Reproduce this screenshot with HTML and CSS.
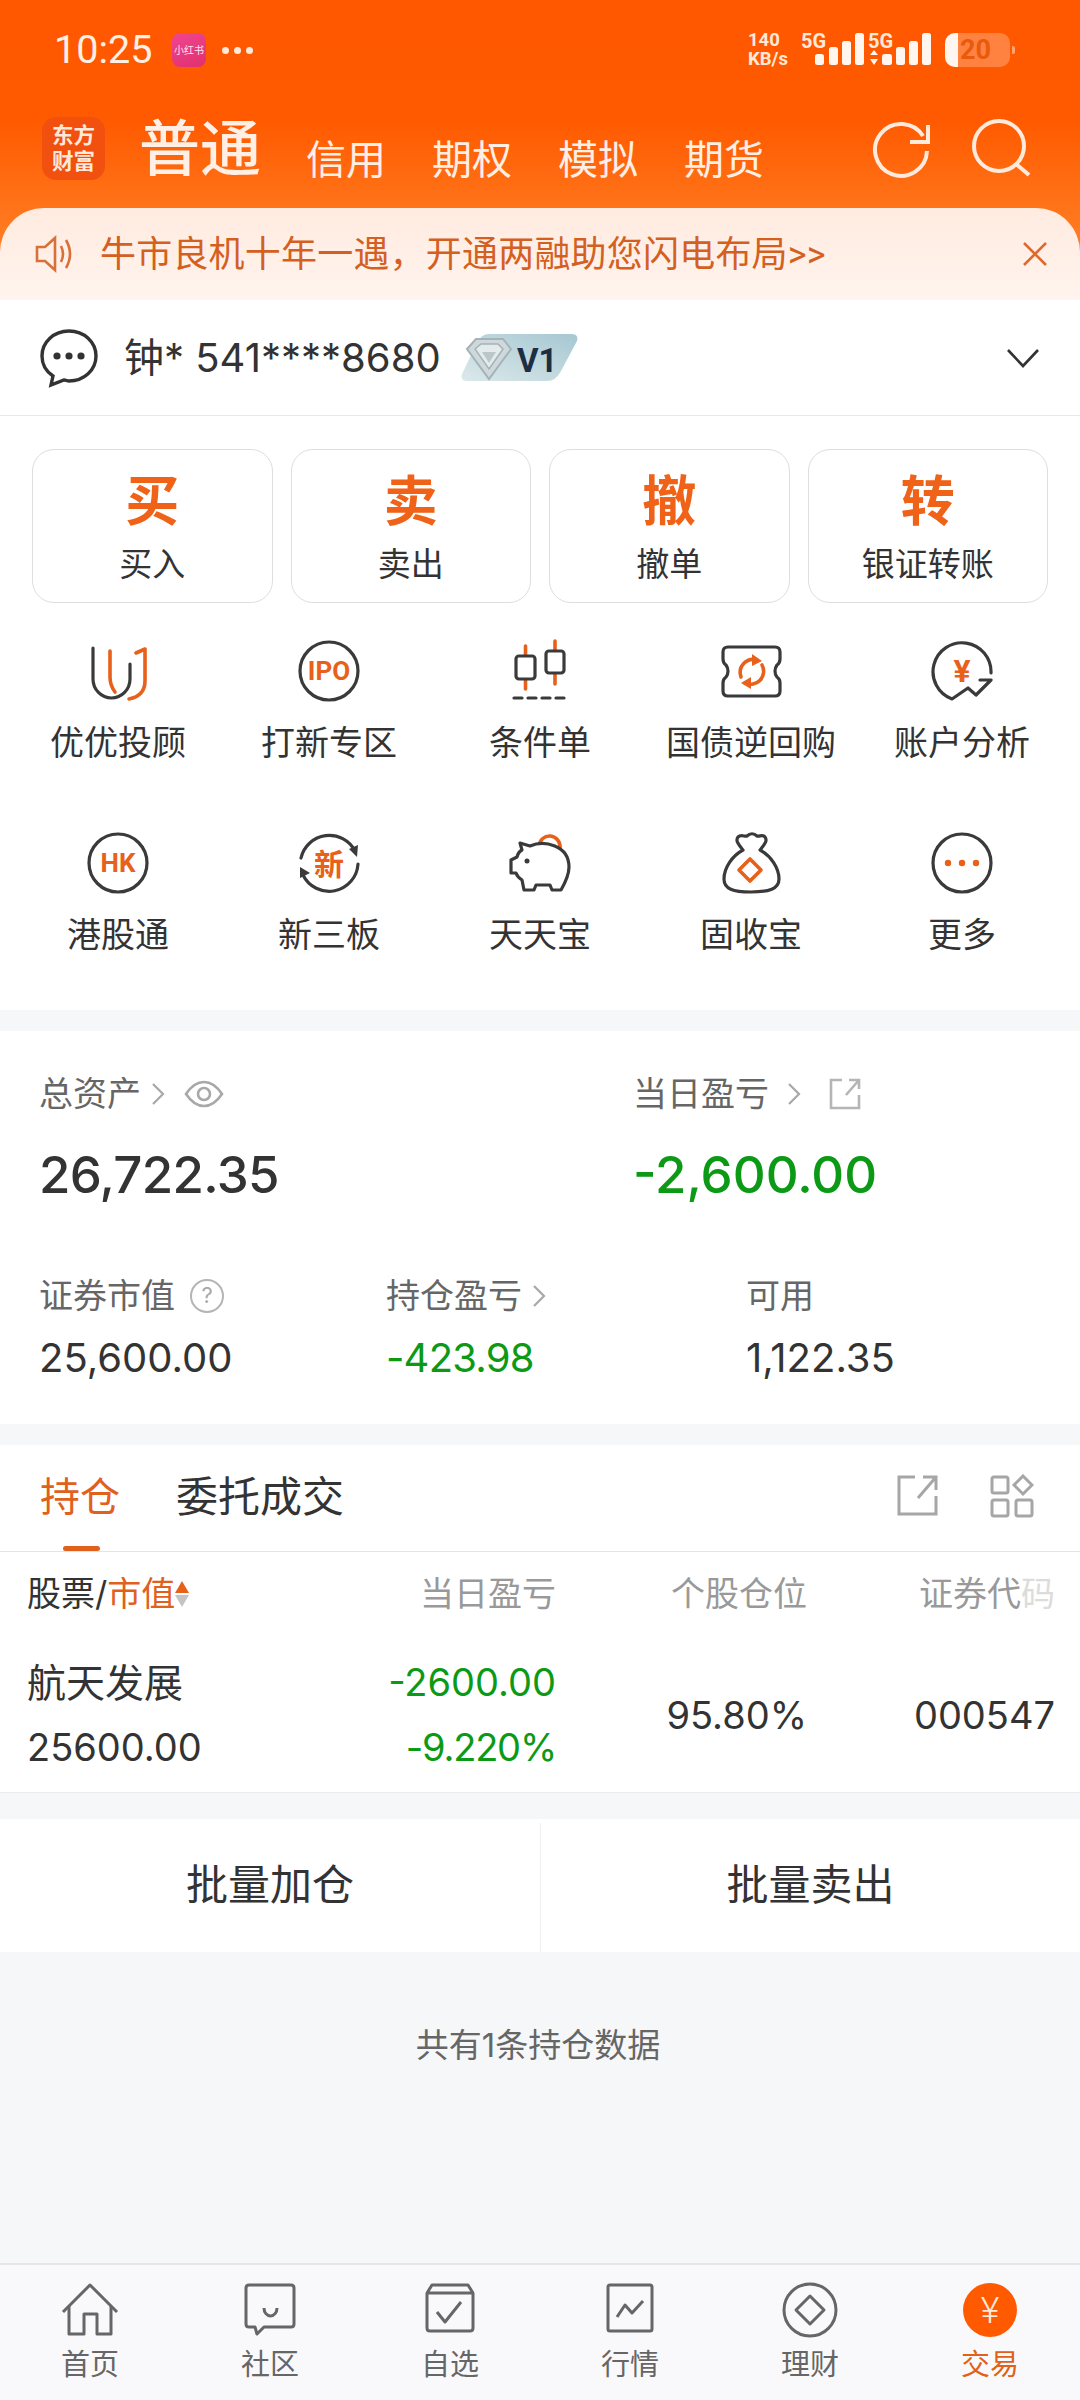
FILE: index.html
```html
<!DOCTYPE html>
<html lang="zh-CN">
<head>
<meta charset="utf-8">
<title>交易</title>
<link rel="stylesheet" href="styles.css">
</head>
<body>
<div class="app">
  <header class="header">
    <div class="status">
      <div class="status-left">
        <span class="clock">10:25</span>
        <span class="xhs">小红书</span>
        <span class="status-dots"><i></i><i></i><i></i></span>
      </div>
      <div class="status-right">
        <div class="speed"><span>140</span><span>KB/s</span></div>
        <svg class="signal" width="64" height="40" viewBox="0 -4 64 40"><text x="1" y="16" class="sig-t">5G</text><rect x="15" y="22" width="9" height="11" rx="2.5"/><rect x="29" y="15" width="9" height="18" rx="2.5"/><rect x="42" y="9" width="9" height="24" rx="2.5"/><rect x="55" y="1" width="9" height="32" rx="2.5"/></svg>
        <svg class="signal" width="64" height="40" viewBox="0 -4 64 40"><text x="0" y="16" class="sig-t">5G</text><path d="M6 18l4 5H2zM6 33l4-6H2z"/><rect x="14" y="22" width="10" height="11" rx="2.5"/><rect x="28" y="15" width="9" height="18" rx="2.5"/><rect x="41" y="9" width="9" height="24" rx="2.5"/><rect x="54" y="1" width="9" height="32" rx="2.5"/></svg>
        <div class="battery"><span class="battery-fill"></span><span class="battery-num">20</span></div>
        <span class="battery-tip"></span>
      </div>
    </div>
    <div class="topbar">
      <div class="logo">东方<br>财富</div>
      <nav class="modes">
        <span class="mode-main">普通</span>
        <span class="mode">信用</span>
        <span class="mode">期权</span>
        <span class="mode">模拟</span>
        <span class="mode">期货</span>
      </nav>
      <div class="top-actions">
        <svg class="ico-refresh" width="60" height="60" viewBox="0 0 60 60"><path d="M52 16A26 26 0 1 0 56 31"/><path d="M57 5V22H39"/></svg>
        <svg class="ico-search" width="60" height="60" viewBox="0 0 60 60"><circle cx="28" cy="29" r="25"/><path d="M45 47L58 58"/></svg>
      </div>
    </div>
    <div class="banner">
      <svg class="ico-speaker" width="40" height="38" viewBox="0 0 40 38"><path d="M2 12H10L20 3V35L10 26H2Z"/><path d="M26 11Q30 19 26 27"/><path d="M31 5Q39 19 31 33"/></svg>
      <span class="banner-text">牛市良机十年一遇，开通两融助您闪电布局&gt;&gt;</span>
      <svg class="ico-close" width="26" height="26" viewBox="0 0 26 26"><path d="M2 2L24 24M24 2L2 24"/></svg>
    </div>
  </header>

  <section class="account">
    <svg class="ico-chat" width="58" height="60" viewBox="0 0 58 60"><path d="M29 3C14 3 2 14 2 28C2 37 7 44 13 48L11 57L24 52C26 52 27 53 29 53C44 53 56 42 56 28C56 14 44 3 29 3Z"/><circle cx="17" cy="28" r="3.6"/><circle cx="29" cy="28" r="3.6"/><circle cx="41" cy="28" r="3.6"/></svg>
    <span class="account-id">钟* 541****8680</span>
    <svg class="badge" width="120" height="50" viewBox="0 0 120 50">
      <defs><linearGradient id="bg1" x1="0" y1="1" x2="1" y2="0"><stop offset="0" stop-color="#dbe9eb"/><stop offset="1" stop-color="#a6c7d1"/></linearGradient></defs>
      <path class="badge-bg" d="M30 1H112Q120 1 118 8L102 38Q97 48 88 48H8Q1 48 3 41L18 10Q22 1 30 1Z"/>
      <path class="badge-gem" d="M8 16L17 6H44L52 16L30 46Z"/>
      <path class="badge-gem-in" d="M16 16L22 11H39L44 16L30 36Z"/>
      <path class="badge-gem-core" d="M23 19H37L30 30Z"/>
      <text x="58" y="39" class="badge-t">V1</text>
    </svg>
    <svg class="chevron" width="34" height="22" viewBox="0 0 34 22"><path d="M2 3L17 19L32 3"/></svg>
  </section>

  <section class="tools">
    <div class="trade-btns">
      <div class="trade-btn"><span class="trade-big">买</span><span class="trade-sub">买入</span></div>
      <div class="trade-btn"><span class="trade-big">卖</span><span class="trade-sub">卖出</span></div>
      <div class="trade-btn"><span class="trade-big">撤</span><span class="trade-sub">撤单</span></div>
      <div class="trade-btn"><span class="trade-big">转</span><span class="trade-sub">银证转账</span></div>
    </div>
    <div class="tool-grid">
      <div class="tool">
        <svg class="gi" width="64" height="64" viewBox="0 0 64 64"><path class="d" d="M7 9V40a18.500 19 0 0 0 37 0V25"/><path class="o" d="M24 12V38c0 6 2 11 5 15"/><path class="o" d="M50 14L59 10V42c0 10-6 16-16 18"/></svg>
        <span class="tool-name">优优投顾</span>
      </div>
      <div class="tool">
        <svg class="gi" width="64" height="64" viewBox="0 0 64 64"><circle class="d" cx="32" cy="32" r="29"/><text x="32" y="41" class="gi-t">IPO</text></svg>
        <span class="tool-name">打新专区</span>
      </div>
      <div class="tool">
        <svg class="gi" width="64" height="64" viewBox="0 0 64 64"><path class="o" d="M17.500 7V50M47 2V45"/><rect class="d w" x="8" y="17" width="19" height="23" rx="3"/><rect class="d w" x="38" y="12" width="18" height="22" rx="3"/><path class="d" stroke-dasharray="8 6" d="M6 59H58"/></svg>
        <span class="tool-name">条件单</span>
      </div>
      <div class="tool">
        <svg class="gi" width="64" height="64" viewBox="0 0 64 64"><path class="d" d="M9 8H56Q61 8 61 13V20Q61 24 58 26Q56 29 56 32Q56 36 58 38Q61 40 61 44V52Q61 57 56 57H9Q4 57 4 52V44Q4 40 7 38Q9 36 9 32Q9 29 7 26Q4 24 4 20V13Q4 8 9 8Z"/><path class="o" d="M22 38A13 13 0 0 1 38 21"/><path class="o" d="M43 26A13 13 0 0 1 26 44"/><path class="of" d="M33 15L43 22L33 27Z"/><path class="of" d="M32 38L22 44L32 50Z"/></svg>
        <span class="tool-name">国债逆回购</span>
      </div>
      <div class="tool">
        <svg class="gi" width="64" height="64" viewBox="0 0 64 64"><path class="d" d="M61 34A29 29 0 1 0 22 60L38 49L46 56L61 41H50"/><text x="32" y="43" class="gi-t gi-yen">¥</text></svg>
        <span class="tool-name">账户分析</span>
      </div>
      <div class="tool">
        <svg class="gi" width="64" height="64" viewBox="0 0 64 64"><circle class="d" cx="32" cy="32" r="29"/><text x="32" y="41" class="gi-t">HK</text></svg>
        <span class="tool-name">港股通</span>
      </div>
      <div class="tool">
        <svg class="gi" width="64" height="64" viewBox="0 0 64 64"><path class="d" d="M4 27A29 29 0 0 1 58 20"/><path class="d" d="M61 33A29 29 0 0 1 6 44"/><path class="df" d="M52 18L61 14L60 26Z"/><path class="df" d="M3 36L13 42L3 47Z"/><text x="32" y="44" class="gi-t gi-xin">新</text></svg>
        <span class="tool-name">新三板</span>
      </div>
      <div class="tool">
        <svg class="gi" width="64" height="64" viewBox="0 0 64 64"><path class="o" d="M31 15A10.500 11 0 0 1 52 17"/><path class="d w" d="M12 12L22 15C36 9 61 14 61 36C61 44 57 52 53 59H44L42 54H28L26 59H16L14 49C11 47 9 45 8 42H3V29L9 26C10 22 12 20 14 19Z"/><circle class="df" cx="19" cy="30" r="2.500"/></svg>
        <span class="tool-name">天天宝</span>
      </div>
      <div class="tool">
        <svg class="gi" width="64" height="64" viewBox="0 0 64 64"><path class="d" d="M24 19C20 14 16 10 19 6C22 3 26 6 28 5C31 2 35 2 38 5C40 6 44 3 46 6C49 10 45 14 41 19C52 25 60 37 60 48C60 58 50 61 32 61C14 61 5 58 5 48C5 37 13 25 24 19Z"/><path class="o" d="M31 28L42 39L31 50L20 39Z"/></svg>
        <span class="tool-name">固收宝</span>
      </div>
      <div class="tool">
        <svg class="gi" width="64" height="64" viewBox="0 0 64 64"><circle class="d" cx="32" cy="32" r="29"/><circle class="of" cx="18" cy="32" r="3.200"/><circle class="of" cx="32" cy="32" r="3.200"/><circle class="of" cx="46" cy="32" r="3.200"/></svg>
        <span class="tool-name">更多</span>
      </div>
    </div>
  </section>

  <section class="assets">
    <div class="asset-row-top">
      <div class="asset-cell-l">
        <div class="asset-label">总资产
          <svg class="mini-chev" width="14" height="24" viewBox="0 0 14 24"><path d="M2 2L12 12L2 22"/></svg>
          <svg class="ico-eye" width="40" height="28" viewBox="0 0 40 28"><path d="M2 14C8 5 14 2 20 2C26 2 32 5 38 14C32 23 26 26 20 26C14 26 8 23 2 14Z"/><circle cx="20" cy="14" r="6"/></svg>
        </div>
        <div class="asset-value">26,722.35</div>
      </div>
      <div>
        <div class="asset-label">当日盈亏
          <svg class="mini-chev chev-far" width="14" height="24" viewBox="0 0 14 24"><path d="M2 2L12 12L2 22"/></svg>
          <svg class="ico-share" width="34" height="34" viewBox="0 0 34 34"><path d="M14 3H3V31H31V18"/><path d="M18 18L31 3M21 3H31V12"/></svg>
        </div>
        <div class="asset-value green">-2,600.00</div>
      </div>
    </div>
    <div class="asset-row-bottom">
      <div class="asset-col-a">
        <div class="asset-label">证券市值
          <span class="help">?</span>
        </div>
        <div class="asset-sub">25,600.00</div>
      </div>
      <div class="asset-col-b">
        <div class="asset-label">持仓盈亏
          <svg class="mini-chev" width="14" height="24" viewBox="0 0 14 24"><path d="M2 2L12 12L2 22"/></svg>
        </div>
        <div class="asset-sub green">-423.98</div>
      </div>
      <div>
        <div class="asset-label">可用</div>
        <div class="asset-sub">1,122.35</div>
      </div>
    </div>
  </section>

  <section class="positions">
    <div class="tabs">
      <span class="tab tab-on">持仓</span>
      <span class="tab">委托成交</span>
      <div class="tab-tools">
        <svg class="tab-ico" width="42" height="42" viewBox="0 0 42 42"><path d="M18 3H2V40H39V22"/><path d="M21 24L39 3M26 3H39V16"/></svg>
        <svg class="tab-ico" width="44" height="44" viewBox="0 0 44 44"><rect x="2" y="3" width="16" height="16" rx="2"/><path d="M33 2L42 11L33 20L24 11Z"/><rect x="2" y="26" width="16" height="16" rx="2"/><rect x="26" y="26" width="16" height="16" rx="2"/></svg>
      </div>
    </div>
    <div class="table-row table-head">
      <div class="th-stock">股票/<b>市值</b><span class="sort"><i class="up"></i><i class="down"></i></span></div>
      <div>当日盈亏</div>
      <div>个股仓位</div>
      <div>证券代<span class="fade">码</span></div>
    </div>
    <div class="table-row table-body">
      <div class="td-stock"><div>航天发展</div><div>25600.00</div></div>
      <div class="td-pnl green"><div>-2600.00</div><div>-9.220%</div></div>
      <div class="td-mid">95.80%</div>
      <div class="td-mid">000547</div>
    </div>
  </section>

  <section class="batch">
    <div class="batch-btn">批量加仓</div>
    <div class="batch-btn">批量卖出</div>
  </section>

  <div class="summary">共有1条持仓数据</div>

  <nav class="tabbar">
    <div class="nav-item">
      <svg class="ni" width="60" height="56" viewBox="0 0 60 56"><path d="M3 30L30 3L57 30"/><path d="M9 24V52H24V32H37V52H51V24"/></svg>
      <span>首页</span>
    </div>
    <div class="nav-item">
      <svg class="ni" width="60" height="56" viewBox="0 0 60 56"><path d="M9 3H51Q54 3 54 6V42Q54 45 51 45H24L17 52L15 45H9Q6 45 6 42V6Q6 3 9 3Z"/><path d="M24 26A6.500 8 0 0 0 37 26"/></svg>
      <span>社区</span>
    </div>
    <div class="nav-item">
      <svg class="ni" width="60" height="56" viewBox="0 0 60 56"><path d="M7 11H53V46Q53 49 50 49H10Q7 49 7 46ZM7 11L12 3H48L53 11"/><path d="M17 30L25 40L41 20"/></svg>
      <span>自选</span>
    </div>
    <div class="nav-item">
      <svg class="ni" width="60" height="56" viewBox="0 0 60 56"><rect x="8" y="3" width="44" height="46" rx="2"/><path d="M17 35L25 23L32 31L43 19"/></svg>
      <span>行情</span>
    </div>
    <div class="nav-item">
      <svg class="ni" width="60" height="56" viewBox="0 0 60 56"><circle cx="30" cy="28" r="26"/><path d="M30 14L44 28L30 42L16 28Z"/></svg>
      <span>理财</span>
    </div>
    <div class="nav-item nav-on">
      <div class="yen-dot">¥</div>
      <span>交易</span>
    </div>
  </nav>
</div>
</body>
</html>
```
FILE: styles.css
```css
* { box-sizing: border-box; }
html, body { margin: 0; padding: 0; }
body {
  width: 1080px;
  height: 2400px;
  overflow: hidden;
  background: #f6f7f9;
  color: #333;
  font-family: Inter, "Noto Sans CJK SC", sans-serif;
}
.app { display: flex; flex-direction: column; height: 2400px; }
svg { display: block; flex: none; fill: none; }
.green { color: #0c9a16; }

/* header */
.header {
  height: 300px;
  background: linear-gradient(180deg, #ff5800 0, #ff5a00 120px, #ff7a20 230px);
  color: #ffefe4;
}
.status {
  height: 100px;
  display: flex;
  align-items: center;
  justify-content: space-between;
  padding: 0 65px 0 54px;
}
.status-left { display: flex; align-items: center; }
.clock { font-family: Roboto, sans-serif; font-size: 39.500px; line-height: 44px; width: 118px; }
.xhs {
  width: 34px;
  height: 34px;
  border-radius: 8px;
  background: linear-gradient(160deg, #f0458f, #e0306f);
  color: #ffe6f2;
  font-size: 10px;
  line-height: 34px;
  text-align: center;
  white-space: nowrap;
}
.status-dots { display: flex; gap: 5px; margin-left: 16px; }
.status-dots i { width: 7px; height: 7px; border-radius: 50%; background: #ffe9da; }
.status-right { display: flex; align-items: center; font-family: Roboto, sans-serif; }
.speed {
  display: flex;
  flex-direction: column;
  width: 52px;
  font-size: 18.500px;
  line-height: 19px;
  font-weight: 700;
  color: #ffe9da;
}
.signal { fill: #fff6ef; margin: -4px 4px 0 0; overflow: visible; }
.sig-t { font-size: 20px; font-weight: 700; fill: #ffe9da; font-family: Roboto, sans-serif; }
.battery {
  width: 65px;
  height: 34px;
  margin-left: 9px;
  border-radius: 10px;
  overflow: hidden;
  background: rgba(255, 255, 255, 0.25);
  display: flex;
  align-items: center;
}
.battery-fill { width: 13px; height: 34px; background: #fff6ef; }
.battery-num { font-size: 27px; font-weight: 700; line-height: 34px; margin-left: 2px; color: #ea5a0c; }
.battery-tip {
  width: 3px;
  height: 8px;
  margin-left: 2px;
  border-radius: 0 2px 2px 0;
  background: rgba(255, 255, 255, 0.45);
}
.topbar {
  height: 108px;
  display: flex;
  align-items: flex-start;
  padding: 17px 49px 0 42px;
}
.logo {
  width: 63px;
  height: 63px;
  border-radius: 14px;
  background: #f2500f;
  text-align: center;
  padding-top: 5px;
  font-size: 21.500px;
  line-height: 26px;
  font-weight: 700;
  color: #ffe9da;
}
.modes { display: flex; align-items: flex-start; margin-left: 34px; }
.mode-main { font-size: 61px; line-height: 70px; margin-top: -3px; margin-right: 45px; font-weight: 500; }
.mode { font-size: 40px; line-height: 50px; margin-top: 18px; margin-right: 46px; }
.top-actions { margin-left: auto; display: flex; align-items: flex-start; gap: 40px; }
.ico-refresh, .ico-search { stroke: #ffeadc; stroke-width: 4; }
.ico-refresh { margin-top: 3px; }
.banner {
  height: 92px;
  border-radius: 44px 44px 0 0;
  background: linear-gradient(180deg, #ffebe0, #fff4ee);
  display: flex;
  align-items: center;
  padding: 0 32px 0 35px;
  color: #d4601f;
}
.ico-speaker { stroke: #d9703a; stroke-width: 2.600; }
.banner-text {
  font-family: Roboto, "Noto Sans CJK SC", sans-serif;
  font-size: 36px;
  letter-spacing: 0.2px;
  line-height: 50px;
  margin: 2px 0 0 25px;
  white-space: nowrap;
}
.ico-close { margin-left: auto; stroke: #dd6a2c; stroke-width: 2.600; }

/* account */
.account {
  height: 116px;
  background: #fff;
  border-bottom: 1px solid #e8e8e8;
  display: flex;
  align-items: center;
  padding: 0 40px;
}
.ico-chat { stroke: #333; stroke-width: 3.400; }
.ico-chat circle { fill: #333; stroke: none; }
.account-id { font-size: 40px; line-height: 50px; margin-left: 26px; white-space: nowrap; }
.badge { margin-left: 18px; }
.badge-bg { fill: url(#bg1); }
.badge-gem { fill: #cfd9dc; stroke: #a3b3b8; stroke-width: 2; }
.badge-gem-in { fill: #e4ebed; stroke: #a3b3b8; stroke-width: 1.500; }
.badge-gem-core { fill: #b9c6ca; }
.badge-t { font-size: 33px; font-weight: 700; fill: #1d2d44; font-family: Roboto, sans-serif; }
.chevron { margin-left: auto; stroke: #333; stroke-width: 2.600; }

/* tools */
.tools { background: #fff; height: 594px; }
.trade-btns {
  display: grid;
  grid-template-columns: repeat(4, 1fr);
  gap: 18px;
  padding: 33px 32px 0;
}
.trade-btn {
  height: 154px;
  border: 1.500px solid #dedede;
  border-radius: 22px;
  display: flex;
  flex-direction: column;
  align-items: center;
}
.trade-big {
  font-size: 54px;
  line-height: 64px;
  margin-top: 20px;
  font-weight: 700;
  color: #ef6218;
}
.trade-sub { font-size: 33px; line-height: 44px; margin-top: 8px; color: #333; }
.tool-grid {
  display: grid;
  grid-template-columns: repeat(5, 211px);
  grid-auto-rows: 192px;
  padding: 36px 0 0 12.500px;
}
.tool { display: flex; flex-direction: column; align-items: center; }
.tool-name { font-size: 34px; line-height: 44px; margin-top: 18px; white-space: nowrap; color: #333; }
.gi { stroke-width: 3.200; stroke-linecap: round; stroke-linejoin: round; }
.gi .d { stroke: #3a3a3a; }
.gi .o { stroke: #e8601a; stroke-width: 3.600; }
.gi .w { fill: #fff; }
.gi .of { fill: #e8601a; stroke: none; }
.gi .df { fill: #3a3a3a; stroke: none; }
.gi-t {
  fill: #e8601a;
  font-size: 26px;
  font-weight: 700;
  text-anchor: middle;
  font-family: Roboto, sans-serif;
}
.gi-yen { font-size: 32px; }
.gi-xin { font-size: 30px; font-family: "Noto Sans CJK SC", sans-serif; }

/* assets */
.assets {
  margin-top: 21px;
  height: 393px;
  background: #fff;
  padding: 43px 0 0 39px;
}
.asset-row-top { display: flex; }
.asset-cell-l { width: 594px; }
.asset-label {
  display: flex;
  align-items: center;
  font-size: 34px;
  line-height: 40px;
  color: #666;
  white-space: nowrap;
}
.mini-chev { margin-left: 10px; stroke: #a8a8a8; stroke-width: 2.200; }
.chev-far { margin-left: 18px; }
.ico-eye { margin-left: 19px; stroke: #a8a8a8; stroke-width: 2.600; }
.ico-share { margin-left: 27px; stroke: #b5b5b5; stroke-width: 2.600; }
.asset-value { font-size: 51px; line-height: 60px; margin-top: 31px; font-weight: 500; color: #333; }
.asset-cell-l .asset-value { letter-spacing: -0.7px; }
.asset-value.green { color: #0c9a16; }
.asset-row-bottom { display: flex; margin-top: 71px; }
.asset-col-a { width: 347px; }
.asset-col-b { width: 360px; }
.asset-col-b .asset-sub { letter-spacing: -0.8px; }
.asset-sub { font-size: 40px; line-height: 50px; margin-top: 17px; }
.help {
  width: 34px;
  height: 34px;
  margin-left: 15px;
  border: 2.500px solid #b5b5b5;
  border-radius: 50%;
  color: #a8a8a8;
  font-size: 22px;
  line-height: 29px;
  text-align: center;
}

/* positions */
.positions { margin-top: 21px; background: #fff; }
.tabs {
  height: 107px;
  display: flex;
  align-items: center;
  padding: 0 46px 4px 40px;
  border-bottom: 1px solid #e4e4e4;
}
.tab { font-size: 42px; line-height: 50px; margin: 2px 0 0 56px; position: relative; }
.tab-on { font-size: 40px; margin-left: 0; color: #e0601c; }
.tab-on::after {
  content: "";
  position: absolute;
  left: 23px;
  top: 74px;
  width: 37px;
  height: 5px;
  border-radius: 3px;
  background: #e0601c;
}
.tab-tools { margin-left: auto; display: flex; gap: 51px; }
.tab-ico { stroke: #a6a6a6; stroke-width: 3; }
.table-row {
  display: grid;
  grid-template-columns: 200px 329px 251px 248px;
  padding-left: 27px;
  text-align: right;
}
.table-head {
  height: 80px;
  align-items: center;
  padding-top: 3px;
  font-size: 34px;
  line-height: 44px;
  color: #999;
}
.th-stock { display: flex; align-items: center; color: #333; text-align: left; white-space: nowrap; }
.th-stock b { font-weight: 400; color: #e0601c; }
.sort { display: flex; flex-direction: column; gap: 2px; }
.sort i { display: block; width: 0; height: 0; border-left: 7px solid transparent; border-right: 7px solid transparent; }
.sort .up { border-bottom: 12px solid #e8601a; }
.sort .down { border-top: 12px solid #c4c4c4; }
.fade { color: #dcdcdc; }
.table-body {
  height: 161px;
  padding-top: 18px;
  border-bottom: 1px solid #ececec;
  font-size: 38px;
  line-height: 65px;
}
.td-stock { text-align: left; }
.td-stock div:first-child { font-size: 39px; }
.td-pnl div:last-child { letter-spacing: -1.2px; }
.td-mid { font-size: 38px; line-height: 130px; color: #333; }

/* batch */
.batch {
  margin-top: 26px;
  height: 133px;
  background: #fff;
  display: grid;
  grid-template-columns: 540px 540px;
}
.batch-btn {
  display: flex;
  align-items: center;
  justify-content: center;
  font-size: 42px;
  line-height: 50px;
  padding-bottom: 2px;
}
.batch-btn + .batch-btn { border-left: 1px solid #f0f0f0; margin-top: 4px; padding-bottom: 6px; }
.summary {
  flex: 1;
  padding: 73px 4px 0 0;
  text-align: center;
  font-size: 33px;
  line-height: 40px;
  color: #666;
}

/* tabbar */
.tabbar {
  height: 137px;
  border-top: 2px solid #e6e6e8;
  background: #f9f9fb;
  display: grid;
  grid-template-columns: repeat(6, 180px);
  padding-top: 17px;
}
.nav-item {
  display: flex;
  flex-direction: column;
  align-items: center;
  font-size: 29px;
  line-height: 40px;
  color: #666;
}
.nav-item span { margin-top: 7px; }
.ni { stroke: #666; stroke-width: 3; stroke-linejoin: round; }
.nav-on { color: #e0601c; }
.yen-dot {
  width: 54px;
  height: 54px;
  margin: 1px 0;
  border-radius: 50%;
  background: #ff5a00;
  color: #ffeadc;
  font-family: Roboto, sans-serif;
  font-size: 36px;
  line-height: 56px;
  text-align: center;
  font-weight: 300;
}
```
